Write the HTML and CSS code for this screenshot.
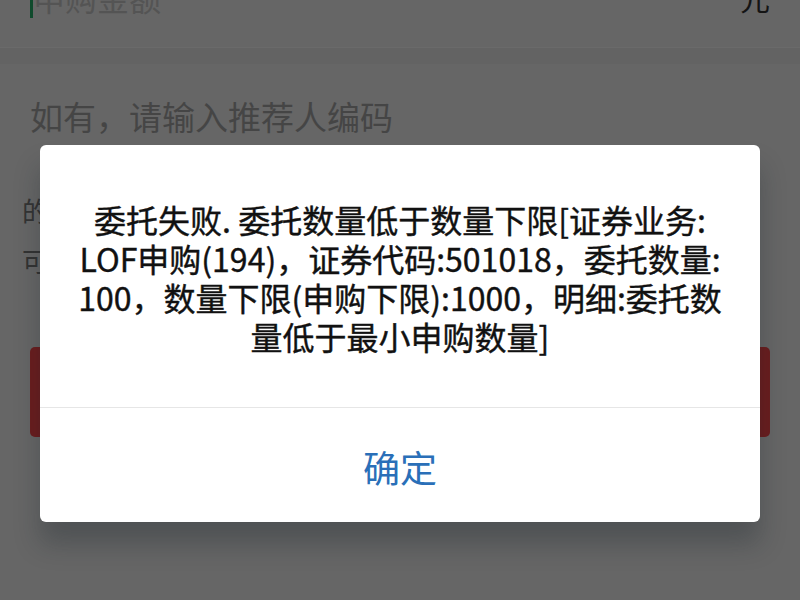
FILE: index.html
```html
<!DOCTYPE html>
<html lang="zh-CN">
<head>
<meta charset="utf-8">
<title>委托失败</title>
<link rel="stylesheet" href="styles.css">
</head>
<body>
<div class="page">
  <div class="row row-amount">
    <div class="field">
      <span class="cursor"></span>
      <span class="placeholder">申购金额</span>
    </div>
    <span class="unit">元</span>
  </div>
  <div class="row row-ref">
    <span class="placeholder-ref">如有，请输入推荐人编码</span>
  </div>
  <div class="section">
    <p class="note">的风险提示内容</p>
    <p class="note">可申购额度说明</p>
    <div class="submit">确认申购</div>
  </div>
</div>

<div class="modal">
  <div class="modal-body">委托失败. 委托数量低于数量下限[证券业务:<br>LOF申购(194)，证券代码:501018，委托数量:<br>100，数量下限(申购下限):1000，明细:委托数<br>量低于最小申购数量]</div>
  <div class="modal-actions">
    <span class="btn-ok">确定</span>
  </div>
</div>
</body>
</html>
```

FILE: styles.css
```css
html, body {
  margin: 0;
  padding: 0;
}
body {
  width: 800px;
  height: 600px;
  overflow: hidden;
  background: #666666;
  font-family: "Noto Sans CJK SC", "Noto Sans", sans-serif;
  position: relative;
}
.page {
  display: flex;
  flex-direction: column;
}
.row-amount {
  margin-top: -20px;
  height: 68px;
  padding: 0 30px 0 30px;
  display: flex;
  justify-content: space-between;
  align-items: flex-start;
  border-bottom: 1px solid #6a6a6a;
  box-sizing: border-box;
}
.field {
  display: flex;
  align-items: flex-start;
}
.cursor {
  width: 3px;
  height: 38px;
  background: #0f4a2c;
}
.placeholder {
  font-size: 32px;
  line-height: 34px;
  color: #545454;
}
.unit {
  font-size: 30px;
  line-height: 34px;
  color: #141414;
}
.row-ref {
  height: 102px;
  padding: 32px 30px 0;
  box-sizing: border-box;
  border-top: 16px solid #636363;
}
.placeholder-ref {
  font-size: 33px;
  line-height: 40px;
  color: #454545;
}
.section {
  padding: 36px 30px 0 22px;
  display: flex;
  flex-direction: column;
}
.note {
  margin: 0;
  font-size: 27px;
  line-height: 50px;
  color: #333333;
  white-space: nowrap;
}
.submit {
  margin-top: 61px;
  margin-left: 8px;
  height: 90px;
  width: 740px;
  background: #6a1d1e;
  border-radius: 5px;
  color: #6a6a6a;
  font-size: 32px;
  display: flex;
  align-items: center;
  justify-content: center;
}
.modal {
  position: absolute;
  left: 40px;
  top: 145px;
  width: 720px;
  height: 377px;
  background: #ffffff;
  border-radius: 6px;
  box-shadow: 0 22px 26px rgba(20, 32, 40, 0.28);
  display: flex;
  flex-direction: column;
}
.modal-body {
  height: 263px;
  box-sizing: border-box;
  padding: 55px 20px 0;
  border-bottom: 1px solid #e6e6e6;
  text-align: center;
  font-size: 32px;
  line-height: 39px;
  font-weight: 400;
  -webkit-text-stroke: 0.4px #111111;
  color: #111111;
}
.modal-actions {
  flex: 1;
  display: flex;
  align-items: center;
  justify-content: center;
}
.btn-ok {
  font-size: 37px;
  line-height: 40px;
  color: #2a6fb8;
  margin-top: 4px;
}
```
